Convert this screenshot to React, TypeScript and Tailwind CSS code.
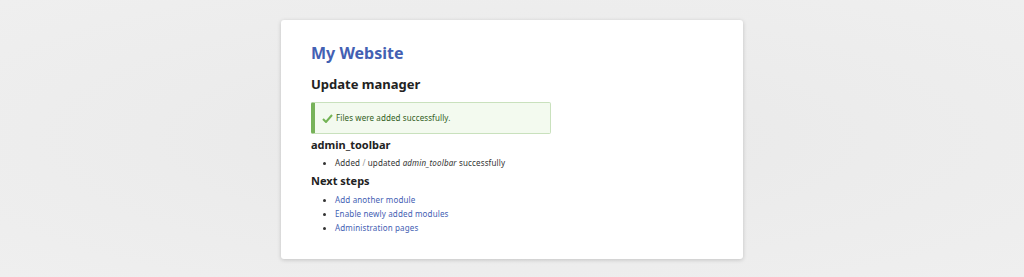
function Item({ children }: { children: React.ReactNode }) {
  return (
    <li className="flex items-center h-[14px]">
      <span className="w-[3px] h-[3px] rounded-full bg-[#333] ml-[12px] mr-[9px] shrink-0" />
      <span className="tracking-[0.15px]">{children}</span>
    </li>
  );
}

export default function App() {
  return (
    <div
      className="w-[1024px] h-[277px] flex justify-center items-start pt-[20px] overflow-hidden"
      style={{ background: "radial-gradient(ellipse at center, #e8e8e8 0%, #ececec 50%, #efefef 100%)", fontFamily: '"Noto Sans", sans-serif' }}
    >
      <div className="w-[462px] h-[239px] bg-white rounded-[3px] shadow-[0_1px_4px_rgba(0,0,0,0.18)] pl-[30px] pr-[30px] pt-[22px]">
        <h1 className="text-[16px] leading-[22px] font-bold text-[#4360b3]">My Website</h1>
        <h2 className="mt-[10px] text-[13px] leading-[20px] font-bold text-[#222]">Update manager</h2>
        <div className="mt-[8px] w-[240px] h-[32px] flex items-center bg-[#f3faef] border border-[#c9e1bd] border-l-[4px] border-l-[#77b259] rounded-[2px] pl-[7px]">
          <svg width="11" height="9" viewBox="0 0 11 9" className="mr-[3px]">
            <path d="M1 5 L4 8 L10 1" stroke="#73b355" strokeWidth="2" fill="none" />
          </svg>
          <span className="text-[8px] text-[#325e1c] tracking-[0.1px]">Files were added successfully.</span>
        </div>
        <h3 className="mt-[4px] text-[11px] leading-[14px] font-bold text-[#222]">admin_toolbar</h3>
        <ul className="mt-[4px] text-[8px] text-[#333]">
          <Item>
            Added <span className="text-[#999]">/</span> updated <em>admin_toolbar</em> successfully
          </Item>
        </ul>
        <h3 className="mt-[4px] text-[11px] leading-[14px] font-bold text-[#222]">Next steps</h3>
        <ul className="mt-[5px] text-[8px] text-[#333]">
          <Item><span className="text-[#4360b3]">Add another module</span></Item>
          <Item><span className="text-[#4360b3]">Enable newly added modules</span></Item>
          <Item><span className="text-[#4360b3]">Administration pages</span></Item>
        </ul>
      </div>
    </div>
  );
}
